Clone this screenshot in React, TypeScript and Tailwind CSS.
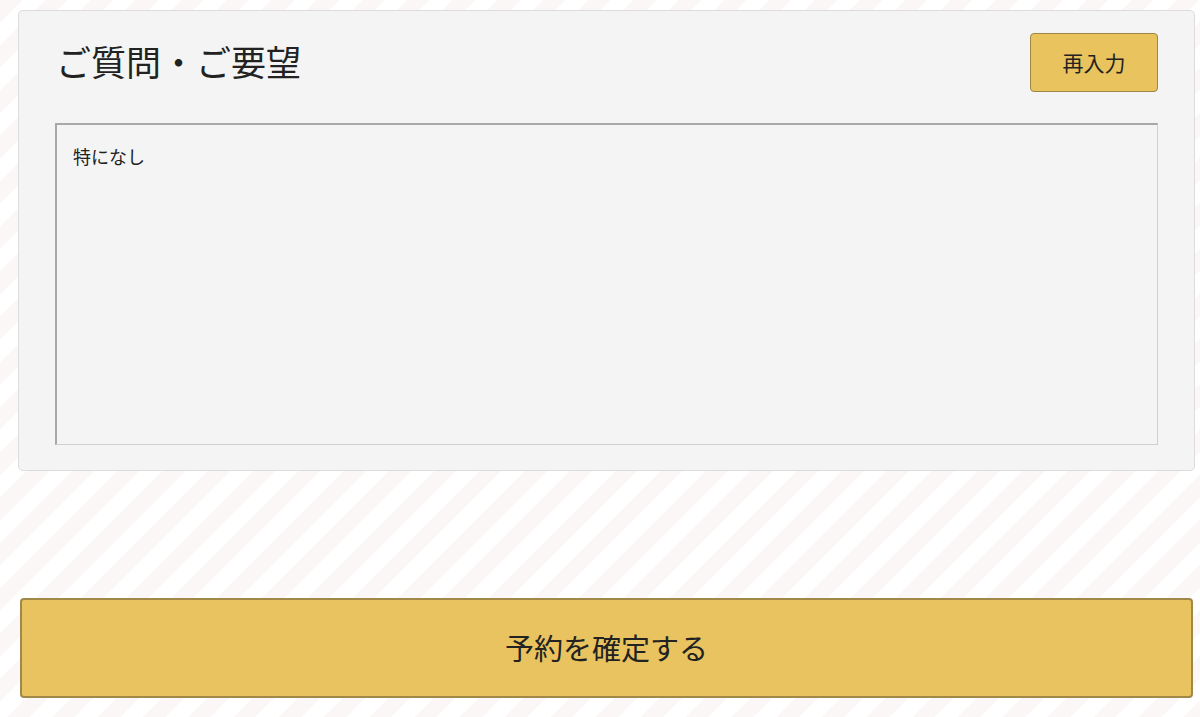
import React from 'react';

const font = "font-['Noto_Sans_CJK_JP','Noto_Sans',sans-serif]";

const App = () => {
  return (
    <div
      className={`${font} min-h-[717px] w-full bg-[repeating-linear-gradient(135deg,#fcf7f7_0px,#fcf7f7_16px,#ffffff_16px,#ffffff_32px)] pt-[10px] text-[#222]`}
    >
      <div className="ml-[18px] mr-[5px] rounded-[5px] border border-[#dcdcdc] bg-[#f4f4f4] px-[36px] pt-[22px] pb-[25px]">
        <div className="flex items-center justify-between">
          <h2 className="ml-[1px] -mt-[4px] text-[35px] leading-none font-normal">ご質問・ご要望</h2>
          <button className="h-[59px] w-[128px] rounded-[4px] border border-[#9e8647] bg-[#e8c35e] text-[21px] text-[#222]">
            再入力
          </button>
        </div>
        <div className="mt-[31px] h-[322px] border border-t-2 border-l-2 border-t-[#a8a8a8] border-l-[#a8a8a8] border-r-[#d0d0d0] border-b-[#d0d0d0] bg-[#f4f4f4] px-[16px] pt-[22px] text-[18px] leading-none">
          特になし
        </div>
      </div>
      <div className="mt-[127px] ml-[20px] mr-[7px]">
        <button className="h-[100px] w-full rounded-[4px] border-2 border-[#a08848] bg-[#e8c35f] text-[29px] text-[#222]">
          予約を確定する
        </button>
      </div>
    </div>
  );
};

export default App;
